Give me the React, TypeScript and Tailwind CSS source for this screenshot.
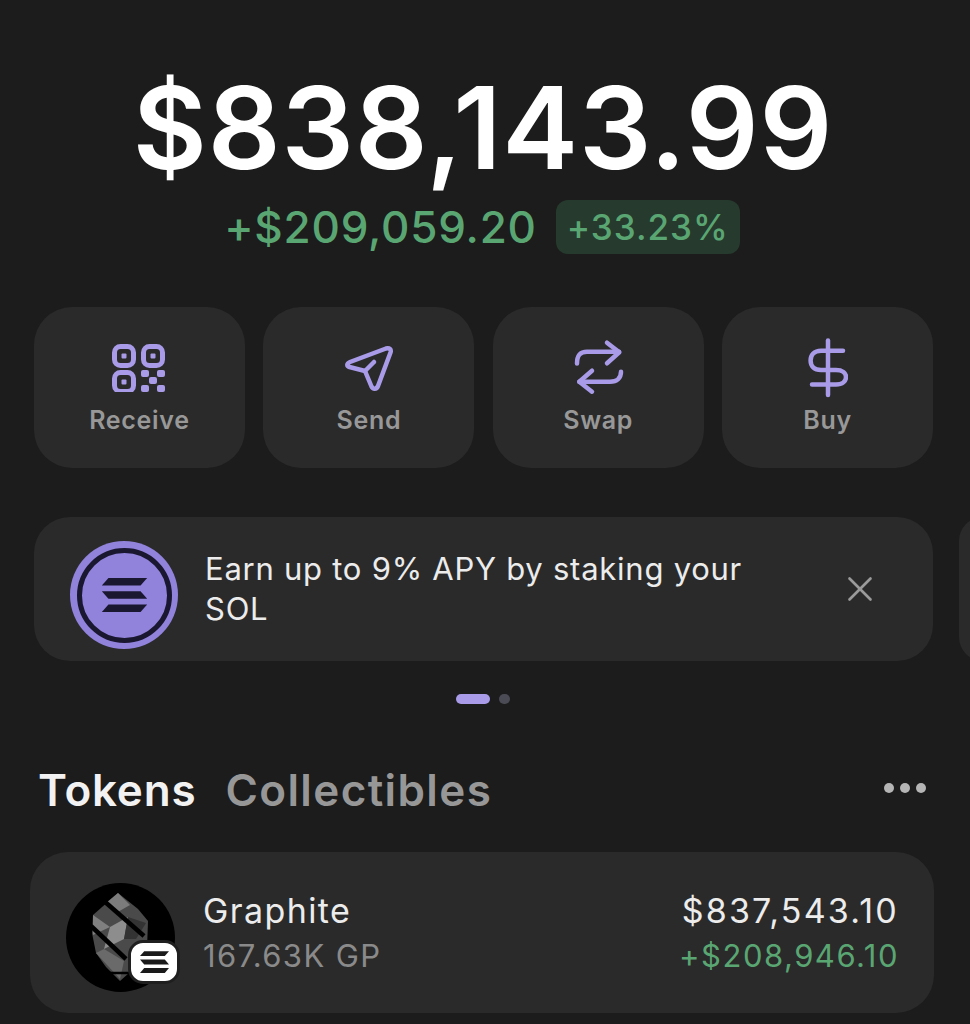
import { X } from "lucide-react";

function QrIcon() {
  return (
    <svg width="54" height="48" viewBox="0 0 54 48" fill="none">
      <rect x="2.5" y="2.5" width="19" height="19" rx="6" stroke="#a99be8" strokeWidth="5" />
      <rect x="31.5" y="2.5" width="19" height="19" rx="6" stroke="#a99be8" strokeWidth="5" />
      <rect x="2.5" y="28.5" width="19" height="19" rx="6" stroke="#a99be8" strokeWidth="5" />
      <rect x="9.5" y="9.5" width="5" height="5" rx="1" fill="#a99be8" />
      <rect x="38.5" y="9.5" width="5" height="5" rx="1" fill="#a99be8" />
      <rect x="9.5" y="35.5" width="5" height="5" rx="1" fill="#a99be8" />
      <rect x="29" y="26" width="8" height="7" rx="2" fill="#a99be8" />
      <rect x="45" y="26" width="8" height="7" rx="2" fill="#a99be8" />
      <rect x="37" y="33" width="8" height="7" rx="2" fill="#a99be8" />
      <rect x="29" y="41" width="8" height="7" rx="2" fill="#a99be8" />
      <rect x="45" y="41" width="8" height="7" rx="2" fill="#a99be8" />
    </svg>
  );
}

function SendIcon() {
  return (
    <svg width="50" height="46" viewBox="0 0 50 46" fill="none" stroke="#a99be8" strokeWidth="4.5" strokeLinecap="round" strokeLinejoin="round">
      <path d="M6 17 L42 3.5 C45.5 2.5 47.5 4.5 46.5 7.5 L34 41 C32.5 44.5 29 44.5 27.5 41.5 L21 26 L5.5 22 C2.5 21 2.5 18.5 6 17 Z" />
      <path d="M21 26 L30 17" />
    </svg>
  );
}

function SwapIcon() {
  return (
    <svg width="52" height="60" viewBox="0 0 52 60" fill="none" stroke="#a99be8" strokeWidth="4.5" strokeLinecap="round" strokeLinejoin="round">
      <path d="M5 25.5 C5 17.5 8 13.7 15 13.7 H47" />
      <path d="M35 4.7 L47.3 14.3 L35 25.3" />
      <path d="M49 33.7 C49 40 45 43.7 38 43.7 H7.3" />
      <path d="M20 32.7 L7.3 43.7 L20 53.7" />
    </svg>
  );
}

function BuyIcon() {
  return (
    <svg width="40" height="60" viewBox="0 0 40 60" fill="none" stroke="#a99be8" strokeWidth="4.5" strokeLinecap="round" strokeLinejoin="round">
      <path d="M20 2.5 V57" />
      <path d="M35 12.7 H13 C6 12.7 2.6 17 2.6 22.5 C2.6 28 6 32 13 32 H28 C34.5 32 38 35 38 39 C38 43 34.5 46.5 28 46.5 H4" />
    </svg>
  );
}

function SolanaBars({ color, className }: { color: string; className: string }) {
  return (
    <svg className={className} viewBox="0 0 48 36" fill={color}>
      <path d="M7 0 H48 L41 8 H0 Z" />
      <path d="M0 14 H41 L48 22 H7 Z" />
      <path d="M7 28 H48 L41 36 H0 Z" />
    </svg>
  );
}

function GraphiteLogo() {
  return (
    <svg width="109" height="109" viewBox="0 0 109 109">
      <circle cx="54.5" cy="54.5" r="54.5" fill="#000" />
      <path d="M52 10 L72 26 L82 38 L81 66 L72 82 L54 98 L40 84 L30 70 L26 50 L27 32 Z" fill="#4a4a4a" />
      <path d="M52 10 L64 22 L50 30 L40 20 Z" fill="#7c7c7c" />
      <path d="M27 32 L44 44 L27 52 Z" fill="#7f7f7f" />
      <path d="M44 44 L62 34 L58 56 L38 66 Z" fill="#8d8d8d" />
      <path d="M62 34 L80 40 L70 56 L58 56 Z" fill="#333" />
      <path d="M30 70 L38 66 L58 78 L54 96 Z" fill="#6a6a6a" />
      <path d="M38 18 L78 53" stroke="#000" strokeWidth="4.5" />
      <path d="M25 43 L60 76" stroke="#000" strokeWidth="4.5" />
      <path d="M36 90 H74" stroke="#000" strokeWidth="2.5" />
    </svg>
  );
}

function ActionButton({ label, icon }: { label: string; icon: React.ReactNode }) {
  return (
    <div className="flex h-[161px] flex-col items-center rounded-[38px] bg-[#2a2a2a]">
      <div className="mt-[31px] flex h-[60px] items-center justify-center">{icon}</div>
      <div className="mt-[4px] text-[25px] font-semibold leading-[36px] tracking-[0.7px] text-[#989898]">{label}</div>
    </div>
  );
}

export default function App() {
  return (
    <div className="h-[1024px] w-[970px] overflow-hidden bg-[#1c1c1c] font-['Inter',sans-serif]">
      <div className="flex flex-col items-center pt-[63px]">
        <div className="pr-[4px] text-[114px] font-semibold leading-[130px] tracking-[0.8px] text-white">$838,143.99</div>
        <div className="mt-[7px] flex items-center gap-[19px] pr-[6px]">
          <div className="text-[44px] font-medium leading-[54px] tracking-[0.8px] text-[#5aa673]">+$209,059.20</div>
          <div className="flex h-[54px] items-center rounded-[12px] bg-[#263a2e] px-[11px] text-[35px] font-medium tracking-[1px] text-[#5aa673]">+33.23%</div>
        </div>
      </div>

      <div className="mt-[53px] grid grid-cols-4 gap-[18.5px] px-[34px] pr-[37px]">
        <ActionButton label="Receive" icon={<QrIcon />} />
        <ActionButton label="Send" icon={<SendIcon />} />
        <ActionButton label="Swap" icon={<SwapIcon />} />
        <ActionButton label="Buy" icon={<BuyIcon />} />
      </div>

      <div className="mt-[49px] flex gap-[26px] pl-[34px]">
        <div className="flex h-[144px] w-[899px] shrink-0 items-center rounded-[36px] bg-[#2a2a2a] pl-[36px] pr-[52px]">
          <div className="mt-[12px] flex h-[108px] w-[108px] shrink-0 items-center justify-center rounded-full bg-[#9182dc]">
            <div className="flex h-[95px] w-[95px] items-center justify-center rounded-full border-[5px] border-[#1a1730]">
              <SolanaBars color="#1a1730" className="h-[34px] w-[49px]" />
            </div>
          </div>
          <div className="ml-[27px] w-[580px] text-[31px] leading-[40px] tracking-[0.75px] text-[#ececec]">
            Earn up to 9% APY by staking your SOL
          </div>
          <X className="ml-auto" size={42} color="#9a9a9a" strokeWidth={1.5} />
        </div>
        <div className="h-[144px] w-[100px] shrink-0 rounded-[24px] bg-[#2a2a2a]" />
      </div>

      <div className="mt-[33px] flex items-center justify-center gap-[9px] pr-[4px]">
        <div className="h-[10px] w-[34px] rounded-full bg-[#a99be8]" />
        <div className="h-[10px] w-[11px] rounded-full bg-[#4b4b55]" />
      </div>

      <div className="mt-[58px] flex items-center pl-[38px] pr-[44px]">
        <div className="text-[44px] font-semibold leading-[56px] tracking-[0.8px] text-[#f2f2f2]">Tokens</div>
        <div className="ml-[29px] text-[44px] font-semibold leading-[56px] tracking-[1.4px] text-[#979797]">Collectibles</div>
        <div className="ml-auto flex gap-[6px] pb-[4px]">
          <div className="h-[10px] w-[10px] rounded-full bg-[#b5b5b5]" />
          <div className="h-[10px] w-[10px] rounded-full bg-[#b5b5b5]" />
          <div className="h-[10px] w-[10px] rounded-full bg-[#b5b5b5]" />
        </div>
      </div>

      <div className="mx-[30px] mt-[34px] flex h-[161px] w-[904px] items-center rounded-[38px] bg-[#2a2a2a] pl-[36px] pr-[35px]">
        <div className="relative mt-[10px] h-[109px] w-[109px] shrink-0">
          <GraphiteLogo />
          <div className="absolute bottom-[8px] right-[-5px] flex h-[44px] w-[52px] items-center justify-center rounded-[15px] border-[3px] border-[#1f1f1f] bg-white">
            <SolanaBars color="#1a1a1a" className="h-[22px] w-[29px]" />
          </div>
        </div>
        <div className="ml-[28px] flex flex-col">
          <div className="text-[34px] leading-[46px] tracking-[1.4px] text-[#ececec]">Graphite</div>
          <div className="text-[31px] leading-[44px] tracking-[1.4px] text-[#8a8a8a]">167.63K GP</div>
        </div>
        <div className="ml-auto flex flex-col items-end">
          <div className="text-[34px] leading-[46px] tracking-[2.2px] text-[#ececec]">$837,543.10</div>
          <div className="text-[31px] leading-[44px] tracking-[1.5px] text-[#5aa673]">+$208,946.10</div>
        </div>
      </div>
    </div>
  );
}
